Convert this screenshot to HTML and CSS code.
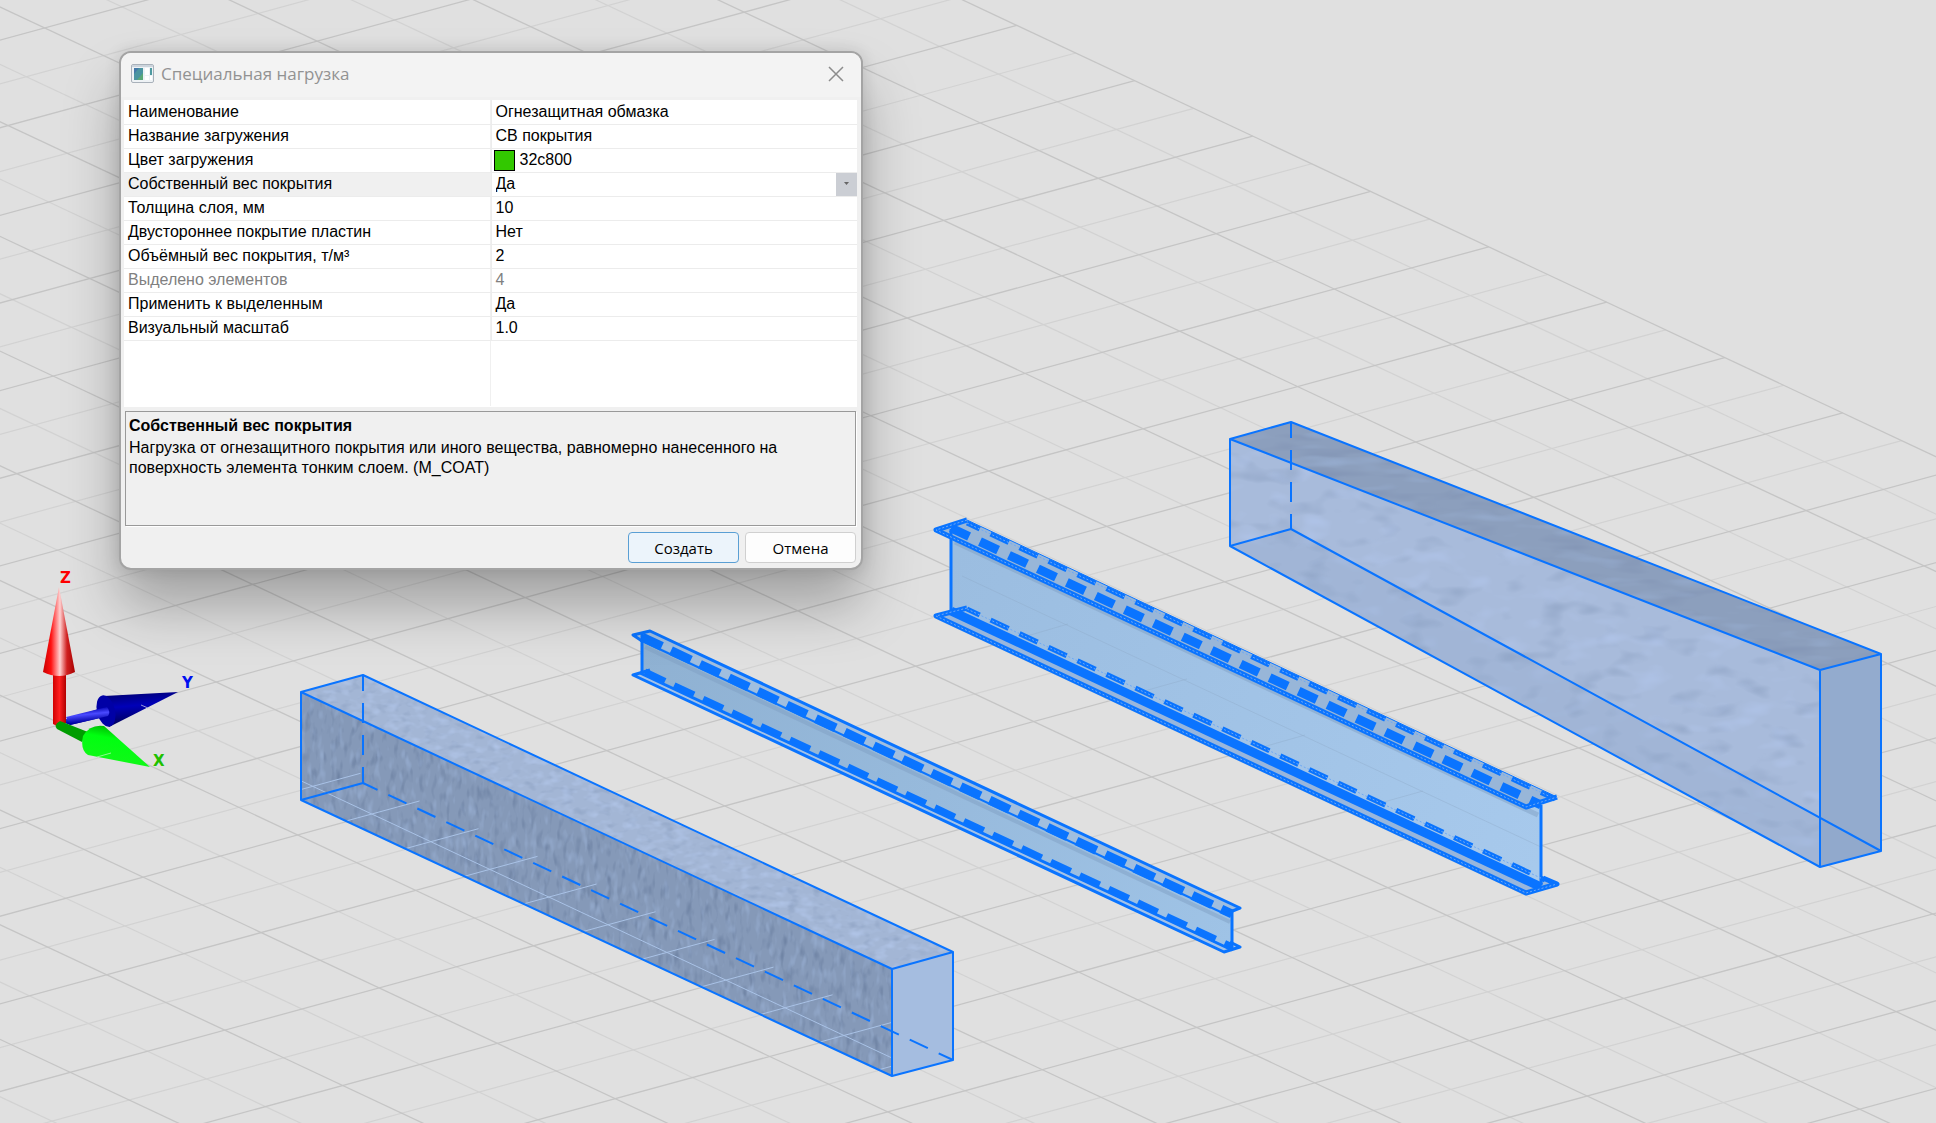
FILE: index.html
```html
<!DOCTYPE html>
<html lang="ru">
<head>
<meta charset="utf-8">
<meta name="viewport" content="width=device-width, initial-scale=1">
<title>Специальная нагрузка</title>
<link rel="stylesheet" href="styles.css">
</head>
<body>
<main class="viewport">
  <svg class="scene" viewBox="0 -1 1936 1123" preserveAspectRatio="xMinYMin slice" aria-hidden="true">
    <defs>
      <filter id="grain-fine" x="0" y="0" width="1" height="1" color-interpolation-filters="sRGB">
        <feTurbulence type="fractalNoise" baseFrequency=".16 .06" numOctaves="2" seed="4" result="n"/>
        <feColorMatrix in="n" values="0 0 0 0 .42  0 0 0 0 .5  0 0 0 0 .63  2.4 0 0 0 -1.25" result="d"/>
        <feColorMatrix in="n" values="0 0 0 0 .6  0 0 0 0 .69  0 0 0 0 .83  0 2 0 0 -1.05" result="l"/>
        <feMerge result="m"><feMergeNode in="SourceGraphic"/><feMergeNode in="d"/><feMergeNode in="l"/></feMerge>
        <feComposite in="m" in2="SourceAlpha" operator="in"/>
      </filter>
      <filter id="grain-top" x="0" y="0" width="1" height="1" color-interpolation-filters="sRGB">
        <feTurbulence type="fractalNoise" baseFrequency=".08 .14" numOctaves="2" seed="9" result="n"/>
        <feColorMatrix in="n" values="0 0 0 0 .55  0 0 0 0 .63  0 0 0 0 .76  2 0 0 0 -1.05" result="d"/>
        <feColorMatrix in="n" values="0 0 0 0 .7  0 0 0 0 .78  0 0 0 0 .92  0 2 0 0 -.95" result="l"/>
        <feMerge result="m"><feMergeNode in="SourceGraphic"/><feMergeNode in="d"/><feMergeNode in="l"/></feMerge>
        <feComposite in="m" in2="SourceAlpha" operator="in"/>
      </filter>
      <filter id="grain-coarse" x="0" y="0" width="1" height="1" color-interpolation-filters="sRGB">
        <feTurbulence type="fractalNoise" baseFrequency=".03 .06" numOctaves="2" seed="12" result="n"/>
        <feColorMatrix in="n" values="0 0 0 0 .55  0 0 0 0 .63  0 0 0 0 .76  2 0 0 0 -1.1" result="d"/>
        <feColorMatrix in="n" values="0 0 0 0 .7  0 0 0 0 .78  0 0 0 0 .93  0 2 0 0 -1.1" result="l"/>
        <feMerge result="m"><feMergeNode in="SourceGraphic"/><feMergeNode in="d"/><feMergeNode in="l"/></feMerge>
        <feComposite in="m" in2="SourceAlpha" operator="in"/>
      </filter>
      <filter id="grain-dark" x="0" y="0" width="1" height="1" color-interpolation-filters="sRGB">
        <feTurbulence type="fractalNoise" baseFrequency=".02 .09" numOctaves="2" seed="7" result="n"/>
        <feColorMatrix in="n" values="0 0 0 0 .5  0 0 0 0 .57  0 0 0 0 .7  2 0 0 0 -1" result="d"/>
        <feColorMatrix in="n" values="0 0 0 0 .6  0 0 0 0 .69  0 0 0 0 .83  0 2 0 0 -1.1" result="l"/>
        <feMerge result="m"><feMergeNode in="SourceGraphic"/><feMergeNode in="d"/><feMergeNode in="l"/></feMerge>
        <feComposite in="m" in2="SourceAlpha" operator="in"/>
      </filter>
      <linearGradient id="web-small" x1="641" y1="640" x2="1232" y2="940" gradientUnits="userSpaceOnUse"><stop offset="0" stop-color="#8fb1d2"/><stop offset="1" stop-color="#9fc3e6"/></linearGradient>
      <linearGradient id="web-large" x1="951" y1="560" x2="1541" y2="860" gradientUnits="userSpaceOnUse"><stop offset="0" stop-color="#9bbde0"/><stop offset="1" stop-color="#a7c9ec"/></linearGradient>
      <linearGradient id="red-cone"><stop offset="0" stop-color="#c80000"/><stop offset=".25" stop-color="#ff1010"/><stop offset=".53" stop-color="#ffd0d0"/><stop offset=".75" stop-color="#d02020"/><stop offset="1" stop-color="#a80000"/></linearGradient>
      <linearGradient id="red-shaft"><stop offset="0" stop-color="#d00000"/><stop offset=".5" stop-color="#ff2020"/><stop offset="1" stop-color="#b00000"/></linearGradient>
      <linearGradient id="blue-cone" x1="0" y1="0" x2=".2" y2="1"><stop offset="0" stop-color="#000068"/><stop offset=".45" stop-color="#0000b8"/><stop offset="1" stop-color="#000050"/></linearGradient>
      <linearGradient id="blue-shaft" x1="0" y1="0" x2=".25" y2="1"><stop offset=".2" stop-color="#0000b0"/><stop offset=".5" stop-color="#4a4aff"/><stop offset=".9" stop-color="#0000a0"/></linearGradient>
      <linearGradient id="green-cone" x1=".5" y1="0" x2=".2" y2="1"><stop offset="0" stop-color="#00b000"/><stop offset=".3" stop-color="#00ff10"/><stop offset=".8" stop-color="#10f818"/><stop offset="1" stop-color="#00a800"/></linearGradient>
      <clipPath id="beam-front"><path d="M301 691L892 968V1075L301 799Z"/></clipPath>
    </defs>

    <g id="grid"></g>

    <!-- near concrete beam -->
    <path fill="#a3b6d5" filter="url(#grain-top)" d="M301 691L363 674L953 951L892 968Z"/>
    <path fill="#8599b8" filter="url(#grain-fine)" d="M301 691L892 968V1075L301 799Z"/>
    <path fill="#a5bde0" d="M892 968L953 951V1059L892 1075Z"/>
    <g id="footprint" class="footprint" clip-path="url(#beam-front)"></g>
    <path class="edge" d="M301 691L363 674L953 951V1059L892 1075L301 799ZL892 968L953 951M892 968V1075M301 799L363 782"/>
    <path class="edge" stroke-dasharray="16 12 20 12 20 12 20" d="M363 674V782"/>
    <path class="edge" stroke-dasharray="20 12" stroke-dashoffset="4" d="M363 782L953 1059"/>

    <!-- far tapered concrete beam -->
    <path fill="#8c9fbd" filter="url(#grain-dark)" d="M1230 438L1291 421L1881 653L1820 669Z"/>
    <path fill="#a8bbdb" filter="url(#grain-coarse)" d="M1230 438L1820 669V866L1230 545Z"/>
    <path fill="#93abce" d="M1820 669L1881 653V850L1820 866Z"/>
    <path fill="#8aa4c8" fill-opacity=".25" d="M1820 817L1881 850L1820 866ZM1230 545L1291 528L1820 817V866Z"/>
    <path class="edge" d="M1230 438L1291 421L1881 653V850L1820 866L1230 545ZL1820 669L1881 653M1820 669V866M1230 545L1291 528L1881 850"/>
    <path class="edge" stroke-dasharray="16 12 20 12 20 12 20" d="M1291 421V528"/>

    <!-- large I-beam -->
    <path fill="#98b6dc" d="M936 615L967 606L1557 883L1526 892Z"/>
    <path fill="url(#web-large)" d="M951 530L1541 804V884L951 609Z"/>
    <path fill="none" stroke="#7f9fc4" stroke-opacity=".5" stroke-width="5" d="M955 541L1538 814"/>
    <path fill="none" stroke="#8fabc8" stroke-opacity=".4" d="M962 575L1541 846M1010 640L1068 623M1130 694L1187 678M1249 750L1305 734M1366 806L1423 790"/>
    <path fill="#98b6d8" d="M936 529L967 519L1557 796L1526 806Z"/>
    <path class="edge edge-thick" d="M951 528V609M1541 804V884"/>
    <path class="edge edge-web" stroke-dasharray="20 12" d="M951 527L1541 804"/>
    <path class="edge edge-flange" stroke-dasharray="20 12" stroke-dashoffset="6" d="M967 522L1555 798"/>
    <path class="edge-core" d="M967 522L1555 798"/>
    <path class="edge edge-thin" d="M967 519L1557 796"/>
    <path class="edge edge-flange" d="M967 519L936 529L1526 806L1557 796"/>
    <path class="edge-core" d="M967 519L936 529L1526 806L1557 796"/>
    <path class="edge edge-web" d="M951 610L1541 886"/>
    <path class="edge edge-flange" stroke-dasharray="20 12" stroke-dashoffset="6" d="M967 608L1545 879"/>
    <path class="edge-core" d="M967 608L1545 879"/>
    <path class="edge edge-flange" d="M967 607L936 615L1526 892L1557 883L1543 877"/>
    <path class="edge-core" d="M967 607L936 615L1526 892L1557 883"/>

    <!-- small I-beam -->
    <path fill="#a5c3e8" d="M633 674L650 669L1240 946L1224 952Z"/>
    <path fill="url(#web-small)" d="M641 633L1232 910V947L641 671Z"/>
    <path fill="none" stroke="#7f9fc4" stroke-opacity=".5" stroke-width="4" d="M645 646L1230 921"/>
    <path fill="#a0bedf" d="M633 634L650 629L1240 907L1225 912Z"/>
    <path class="edge edge-thick" d="M642 633V672M1232 910V947"/>
    <path class="edge edge-web" stroke-dasharray="22 10" d="M642 636L1232 913"/>
    <path class="edge" d="M640 639L1225 913"/>
    <path class="edge edge-thick" d="M1225 913L1240 907L650 630L633 634L642 640"/>
    <path class="edge edge-mid" stroke-dasharray="22 10" d="M645 671L1232 946"/>
    <path class="edge edge-thick" d="M640 672L1232 949"/>
    <path class="edge edge-thick" d="M650 669L633 674L1224 951L1240 946L1230 941"/>

    <!-- coordinate axes -->
    <path fill="url(#blue-shaft)" d="M60 720L105 706L109 715L70 724Z"/>
    <path fill="url(#blue-cone)" d="M104 695L178 691L109 726Z"/>
    <ellipse cx="106" cy="710" rx="9" ry="16" fill="#0000a6" transform="rotate(-14 106 710)"/>
    <path fill="url(#blue-shaft)" d="M66 716L107 706Q111 711 108 715L70 724Z"/>
    <path stroke="#9a9ad8" d="M141 704L148 707"/>
    <path fill="url(#red-shaft)" d="M53 670H66V722L57 725L53 723Z"/>
    <path fill="url(#red-cone)" d="M59 586L75 671Q59 679 43 671Z"/>
    <path fill="#009c00" d="M60 720L88 731L82 741L57 728Q53 724 60 720Z"/>
    <path fill="url(#green-cone)" d="M150 766L104 725Q90 723 83 735Q80 749 88 754Z"/>
    <path stroke="#90f890" d="M97 756L111 752"/>
    <g class="axis-labels">
      <text x="60" y="582" fill="#f00">Z</text>
      <text x="182" y="687" fill="#0010f0">Y</text>
      <text x="153" y="765" fill="#20c000">X</text>
    </g>
  </svg>

  <section class="dialog" role="dialog" aria-labelledby="dialog-title">
    <header class="titlebar">
      <svg class="app-icon" viewBox="0 0 23 19" aria-hidden="true">
        <rect x=".5" y=".5" width="22" height="18" rx="1.5" fill="#eef2f5" stroke="#a9b1ba"/>
        <path fill="#ccd4dc" d="M1 1H22V3H1Z"/>
        <path fill="#4a94a0" d="M3 4H12V16H3Z"/>
        <path fill="#4478a8" d="M3 4H8L3 10Z"/>
        <path fill="#5aa878" d="M12 9V16H6Z"/>
        <path fill="#fff" d="M14 4H18V11H14ZM14 12H18V16H14ZM19 12H21V16H19Z"/>
        <path fill="#4f9aa0" d="M19 4H21V11H19Z"/>
      </svg>
      <h1 class="title" id="dialog-title">Специальная нагрузка</h1>
      <button class="close" type="button" aria-label="Закрыть">
        <svg viewBox="0 0 16 16" width="16" height="16" aria-hidden="true"><path d="M1 1L15 15M15 1L1 15"/></svg>
      </button>
    </header>

    <div class="property-grid">
      <table class="properties">
        <tbody>
          <tr><th scope="row">Наименование</th><td>Огнезащитная обмазка</td></tr>
          <tr><th scope="row">Название загружения</th><td>СВ покрытия</td></tr>
          <tr><th scope="row">Цвет загружения</th><td class="color-cell"><span class="color"><span class="swatch"></span>32c800</span></td></tr>
          <tr class="selected">
            <th scope="row"><label for="own-weight">Собственный вес покрытия</label></th>
            <td class="select-cell">
              <div class="dropdown">
                <select id="own-weight"><option selected>Да</option><option>Нет</option></select>
                <svg class="arrow" viewBox="0 0 21 23" aria-hidden="true"><path d="M8 9H13L10.500 12Z"/></svg>
              </div>
            </td>
          </tr>
          <tr><th scope="row">Толщина слоя, мм</th><td>10</td></tr>
          <tr><th scope="row">Двустороннее покрытие пластин</th><td>Нет</td></tr>
          <tr><th scope="row">Объёмный вес покрытия, т/м³</th><td>2</td></tr>
          <tr class="readonly"><th scope="row">Выделено элементов</th><td>4</td></tr>
          <tr><th scope="row">Применить к выделенным</th><td>Да</td></tr>
          <tr><th scope="row">Визуальный масштаб</th><td>1.0</td></tr>
        </tbody>
      </table>
    </div>

    <div class="description">
      <h2>Собственный вес покрытия</h2>
      <p>Нагрузка от огнезащитного покрытия или иного вещества, равномерно нанесенного на поверхность элемента тонким слоем. (M_COAT)</p>
    </div>

    <footer class="actions">
      <button class="button button-default" type="button">Создать</button>
      <button class="button" type="button">Отмена</button>
    </footer>
  </section>
</main>
<script src="scene.js"></script>
</body>
</html>
```
FILE: styles.css
```css
* {
  box-sizing: border-box;
}

body {
  margin: 0;
  background: #e0e0e0;
  color: #000;
  font: 16px/20px "Liberation Sans", Arial, sans-serif;
}

.viewport {
  position: relative;
  min-height: 100vh;
  overflow: hidden;
}

.scene {
  display: block;
  width: 100%;
  height: 100vh;
}

/* 3D scene */
.grid-major {
  stroke: #c5c5c5;
  stroke-width: 1.3;
}

.grid-minor {
  stroke: #d2d2d2;
  stroke-width: 1.2;
}

.footprint {
  stroke: #a9c2e6;
}

.edge {
  fill: none;
  stroke: #0a74ff;
  stroke-width: 2;
  stroke-linejoin: round;
}

.edge-thin {
  stroke-width: 1;
}

.edge-thick {
  stroke-width: 3;
}

.edge-flange {
  stroke-width: 5;
}

.edge-mid {
  stroke-width: 7;
}

.edge-web {
  stroke-width: 9;
}

.edge-core {
  fill: none;
  stroke: #6fa9f5;
  stroke-width: 1;
  stroke-dasharray: 2 2;
}

.axis-labels {
  font: bold 15px "DejaVu Sans", Verdana, sans-serif;
}

/* Dialog window, floating over the scene */
.dialog {
  position: absolute;
  top: 51px;
  left: 119px;
  display: flex;
  flex-direction: column;
  width: 744px;
  max-width: calc(100% - 119px);
  border: 2px solid #a4a4a4;
  border-radius: 12px;
  background: #f0f0f0;
  box-shadow: 0 36px 56px rgba(0, 0, 0, .28), 0 0 16px rgba(0, 0, 0, .12);
}

.titlebar {
  display: flex;
  align-items: center;
  gap: 7px;
  height: 44px;
  margin-bottom: 3px;
  padding: 0 15px 3px 10px;
  border-radius: 10px 10px 0 0;
  background: #f3f3f3;
}

.app-icon {
  width: 23px;
  height: 19px;
}

.title {
  flex: 1;
  margin: 0;
  color: #929292;
  font: 17px/24px "Open Sans", "Noto Sans", sans-serif;
}

.close {
  display: grid;
  padding: 2px;
  border: 0;
  background: none;
}

.close path {
  fill: none;
  stroke: #8c8c8c;
  stroke-width: 1.5;
}

.property-grid {
  height: 307px;
  margin: 0 4px 4px 3px;
  background: linear-gradient(#f0f0f0, #f0f0f0) 366px 0 / 1px 306px no-repeat #fff;
}

.properties {
  width: 100%;
  border-collapse: collapse;
  table-layout: fixed;
}

.properties th,
.properties td {
  height: 24px;
  padding: 0 4px;
  border-bottom: 1px solid #ececec;
  font-weight: normal;
  text-align: left;
  white-space: nowrap;
}

.properties th {
  width: 367px;
  border-right: 1px solid #ececec;
}

.selected th {
  background: #f0f0f0;
}

.readonly {
  color: #808080;
}

.properties .color-cell {
  padding: 0 2px;
}

.color {
  display: flex;
  gap: 5px;
}

.swatch {
  width: 21px;
  height: 21px;
  border: 1px solid #000;
  background: #32c800;
}

.properties .select-cell {
  padding: 0;
}

.dropdown {
  position: relative;
}

.dropdown select {
  display: block;
  width: 100%;
  height: 23px;
  padding: 0 24px 0 4px;
  border: 0;
  appearance: none;
  background: #fff;
  color: inherit;
  font: inherit;
}

.arrow {
  position: absolute;
  top: 0;
  right: 0;
  width: 21px;
  height: 23px;
  background: #cbced4;
  fill: #666;
  pointer-events: none;
}

.description {
  height: 115px;
  margin: 0 5px 0 4px;
  padding: 4px 3px;
  border: 1px solid #999;
  box-shadow: 1px 1px 0 #fff;
}

.description h2 {
  margin: 0 0 2px;
  font-size: 16px;
  line-height: 20px;
}

.description p {
  margin: 0;
}

.actions {
  display: flex;
  justify-content: flex-end;
  gap: 6px;
  padding: 6px 5px 5px;
}

.button {
  width: 111px;
  height: 31px;
  padding: 0;
  border: 1px solid #d0d0d0;
  border-radius: 4px;
  background: #fdfdfd;
  color: #000;
  font: 15px/20px "Open Sans", "Noto Sans", sans-serif;
}

.button-default {
  border-color: #5a9fd4;
  background: #ecf4fb;
}
```
FILE: scene.js
```js
// Ground grid: two families of parallel lines in isometric projection.
const SVG = 'http://www.w3.org/2000/svg';
const origin = [1016.7, 24.3];
const along = [59, 27.69];
const across = [-77.25, 21.1];

const point = (i, j) => [
  origin[0] + i * along[0] + j * across[0],
  origin[1] + i * along[1] + j * across[1],
];

function addLine(parent, from, to, className) {
  const line = document.createElementNS(SVG, 'line');
  line.setAttribute('x1', from[0]);
  line.setAttribute('y1', from[1]);
  line.setAttribute('x2', to[0]);
  line.setAttribute('y2', to[1]);
  if (className) line.setAttribute('class', className);
  parent.append(line);
}

const grid = document.getElementById('grid');
for (const odd of [1, 0]) {
  const className = odd ? 'grid-minor' : 'grid-major';
  for (let j = odd; j <= 42; j += 2) addLine(grid, point(-20, j), point(50, j), className);
  for (let i = -20 + odd; i <= 50; i += 2) addLine(grid, point(i, 0), point(i, 42), className);
}

// Grid lines seen through the side of the near beam.
const footprint = document.getElementById('footprint');
addLine(footprint, [295, 777], [892, 1057]);
for (let k = 0; k < 11; k++) {
  const x = 313.5 + 59 * k;
  const y = 785.3 + 27.69 * k;
  addLine(footprint, [x + 47, y - 13], [x - 30, y + 8]);
}
```
